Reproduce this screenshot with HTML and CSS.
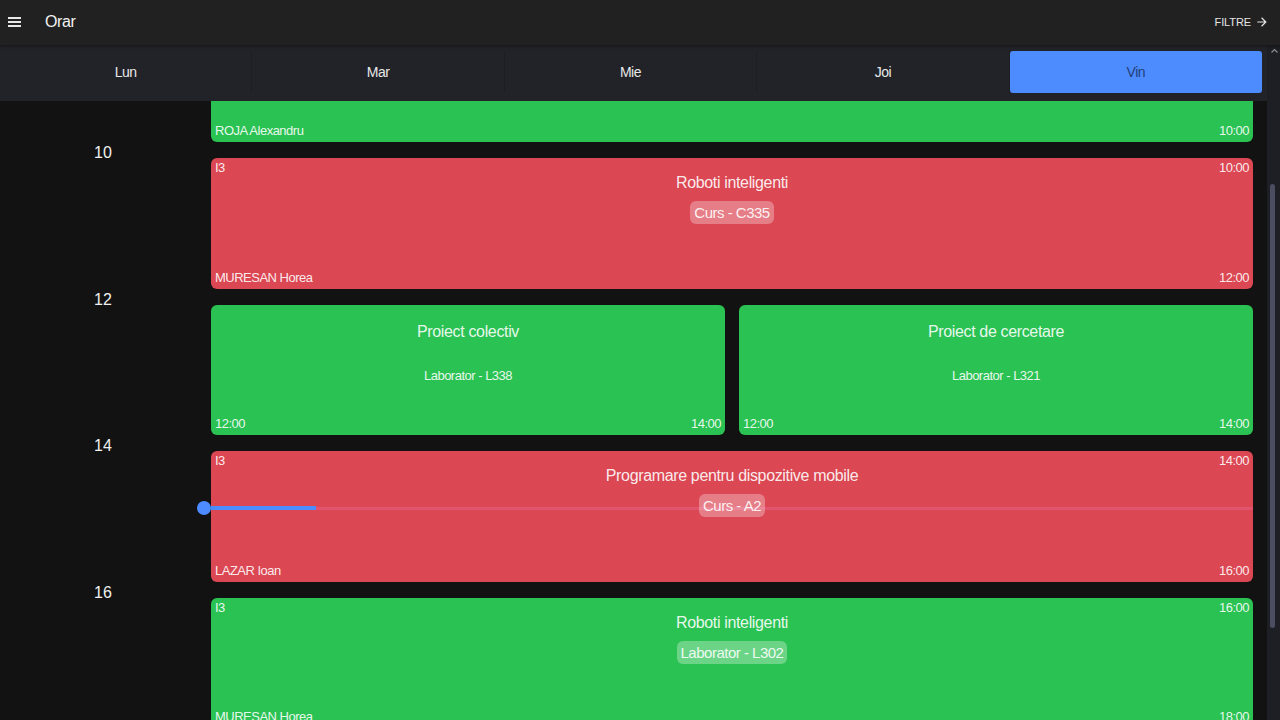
FILE: index.html
```html
<!DOCTYPE html>
<html lang="ro">
<head>
<meta charset="utf-8">
<title>Orar</title>
<link rel="stylesheet" href="styles.css">
</head>
<body>
<div class="app">
  <header class="topbar">
    <div class="topbar-left">
      <svg class="menu-icon" width="13" height="12" viewBox="0 0 13 12"><rect x="0" y="1" width="13" height="2" fill="#e8e8e8"/><rect x="0" y="5" width="13" height="2" fill="#e8e8e8"/><rect x="0" y="9" width="13" height="2" fill="#e8e8e8"/></svg>
      <span class="app-title">Orar</span>
    </div>
    <div class="filter-btn">
      <span>FILTRE</span>
      <svg class="arrow-icon" width="14" height="14" viewBox="0 0 24 24"><path d="M12 4l-1.41 1.41L16.17 11H4v2h12.17l-5.58 5.59L12 20l8-8z" fill="#e8e8e8"/></svg>
    </div>
  </header>

  <div class="main">
    <div class="content">
      <nav class="days">
        <div class="day">Lun</div>
        <div class="day">Mar</div>
        <div class="day">Mie</div>
        <div class="day">Joi</div>
        <div class="day active">Vin</div>
      </nav>

      <div class="timeline">
        <div class="slots">
          <div class="slot">
            <div class="hour"></div>
            <div class="events">
              <div class="card green">
                <div class="card-row card-bottom"><span>ROJA Alexandru</span><span>10:00</span></div>
              </div>
            </div>
          </div>

          <div class="slot">
            <div class="hour">10</div>
            <div class="events">
              <div class="card red">
                <div class="card-row"><span>I3</span><span>10:00</span></div>
                <div class="card-title">Roboti inteligenti</div>
                <div class="card-sub"><span class="pill">Curs - C335</span></div>
                <div class="card-row card-bottom"><span>MURESAN Horea</span><span>12:00</span></div>
              </div>
            </div>
          </div>

          <div class="slot">
            <div class="hour">12</div>
            <div class="events">
              <div class="card green">
                <div class="card-title card-title-solo">Proiect colectiv</div>
                <div class="card-plain">Laborator - L338</div>
                <div class="card-row card-bottom"><span>12:00</span><span>14:00</span></div>
              </div>
              <div class="card green">
                <div class="card-title card-title-solo">Proiect de cercetare</div>
                <div class="card-plain">Laborator - L321</div>
                <div class="card-row card-bottom"><span>12:00</span><span>14:00</span></div>
              </div>
            </div>
          </div>

          <div class="slot">
            <div class="hour">14</div>
            <div class="events">
              <div class="card red">
                <div class="card-row"><span>I3</span><span>14:00</span></div>
                <div class="card-title">Programare pentru dispozitive mobile</div>
                <div class="card-sub"><span class="pill">Curs - A2</span></div>
                <div class="card-row card-bottom"><span>LAZAR Ioan</span><span>16:00</span></div>
              </div>
            </div>
            <div class="now-line">
              <span class="now-dot"></span>
              <span class="now-past"></span>
              <span class="now-rest"></span>
            </div>
          </div>

          <div class="slot">
            <div class="hour">16</div>
            <div class="events">
              <div class="card green">
                <div class="card-row"><span>I3</span><span>16:00</span></div>
                <div class="card-title">Roboti inteligenti</div>
                <div class="card-sub"><span class="pill">Laborator - L302</span></div>
                <div class="card-row card-bottom"><span>MURESAN Horea</span><span>18:00</span></div>
              </div>
            </div>
          </div>
        </div>
      </div>
    </div>

    <div class="scrollbar">
      <svg class="sb-arrow" width="7" height="5" viewBox="0 0 7 5"><path d="M0.5 4.5L3.5 1.5L6.5 4.5" stroke="#8a8c94" stroke-width="1.2" fill="none"/></svg>
      <div class="sb-thumb"></div>
    </div>
  </div>
</div>
</body>
</html>
```

FILE: styles.css
```css
html, body {
  margin: 0;
  padding: 0;
  background: #121212;
}

body {
  font-family: "Liberation Sans", Arial, sans-serif;
  color: #f0f0f0;
}

.app {
  width: 1280px;
  height: 720px;
  display: flex;
  flex-direction: column;
  overflow: hidden;
}

/* top bar */
.topbar {
  flex: none;
  height: 45px;
  box-sizing: border-box;
  padding: 0 11px 2px 8px;
  background: #212121;
  display: flex;
  align-items: center;
  justify-content: space-between;
  box-shadow: 0 1px 3px rgba(0, 0, 0, 0.45);
  position: relative;
  z-index: 3;
}

.topbar-left {
  display: flex;
  align-items: center;
}

.menu-icon {
  display: block;
}

.app-title {
  margin-left: 24px;
  font-size: 16px;
  letter-spacing: -0.4px;
  color: #f2f2f2;
}

.filter-btn {
  display: flex;
  align-items: center;
  font-size: 11px;
  letter-spacing: -0.1px;
  color: #e6e6e6;
}

.arrow-icon {
  display: block;
  margin-left: 4px;
}

/* main area */
.main {
  flex: 1;
  min-height: 0;
  display: flex;
}

.content {
  flex: 1;
  min-width: 0;
  display: flex;
  flex-direction: column;
}

/* day tabs */
.days {
  flex: none;
  height: 56px;
  box-sizing: border-box;
  padding: 6px 5px 8px 0;
  background: #222328;
  display: grid;
  grid-template-columns: repeat(5, 1fr);
  position: relative;
  z-index: 2;
}

.day {
  display: flex;
  align-items: center;
  justify-content: center;
  font-size: 14px;
  letter-spacing: -0.5px;
  color: #e8e8e8;
  border-right: 1px solid #1d1e22;
}

.day.active {
  background: #4d8cff;
  border-radius: 3px;
  border-right: none;
  color: #22407a;
}

/* timeline */
.timeline {
  flex: 1;
  min-height: 0;
  overflow: hidden;
}

.slots {
  margin-top: -97.5px;
  padding-right: 14px;
}

.slot {
  position: relative;
  height: 146.5px;
  display: grid;
  grid-template-columns: 206px 1fr;
  column-gap: 5px;
}

.hour {
  margin-top: -6px;
  text-align: center;
  font-size: 16px;
  line-height: 18px;
  color: #f0f0f0;
}

.events {
  box-sizing: border-box;
  padding: 8px 0;
  display: flex;
  gap: 14px;
}

.card {
  flex: 1;
  min-width: 0;
  box-sizing: border-box;
  padding: 2px 4px 3px;
  border-radius: 6px;
  display: flex;
  flex-direction: column;
  color: rgba(255, 255, 255, 0.9);
}

.card.green {
  background: #2bc254;
}

.card.red {
  background: #db4753;
}

.card-row {
  display: flex;
  justify-content: space-between;
  font-size: 13px;
  line-height: 16px;
  letter-spacing: -0.5px;
}

.card-bottom {
  margin-top: auto;
}

.card-title {
  margin-top: -3px;
  text-align: center;
  font-size: 16px;
  line-height: 20px;
  letter-spacing: -0.35px;
}

.card-title-solo {
  margin-top: 15px;
}

.card-sub {
  margin-top: 8px;
  text-align: center;
}

.pill {
  position: relative;
  z-index: 2;
  display: inline-block;
  padding: 2px 4px;
  font-size: 15px;
  line-height: 19px;
  letter-spacing: -0.5px;
  border-radius: 6px;
  background: rgba(255, 255, 255, 0.3);
}

.card-plain {
  margin-top: 26px;
  text-align: center;
  font-size: 13px;
  line-height: 16px;
  letter-spacing: -0.5px;
}

/* current time indicator */
.now-line {
  position: absolute;
  left: 197px;
  right: 0;
  top: 58px;
  height: 14px;
  display: flex;
  align-items: center;
  z-index: 1;
  pointer-events: none;
}

.now-dot {
  flex: none;
  width: 14px;
  height: 14px;
  border-radius: 50%;
  background: #4d8cff;
}

.now-past {
  flex: none;
  width: 105px;
  height: 4px;
  background: #4d8cff;
}

.now-rest {
  flex: 1;
  height: 3px;
  background: #e2536e;
}

/* scrollbar */
.scrollbar {
  flex: none;
  width: 13px;
  background: #1e1f24;
  display: flex;
  flex-direction: column;
  align-items: flex-start;
}

.sb-arrow {
  display: block;
  margin: 3px 0 0 4px;
}

.sb-thumb {
  margin: 131px 0 0 3px;
  width: 5px;
  height: 444px;
  border-radius: 3px;
  background: #4a4e60;
}
```
